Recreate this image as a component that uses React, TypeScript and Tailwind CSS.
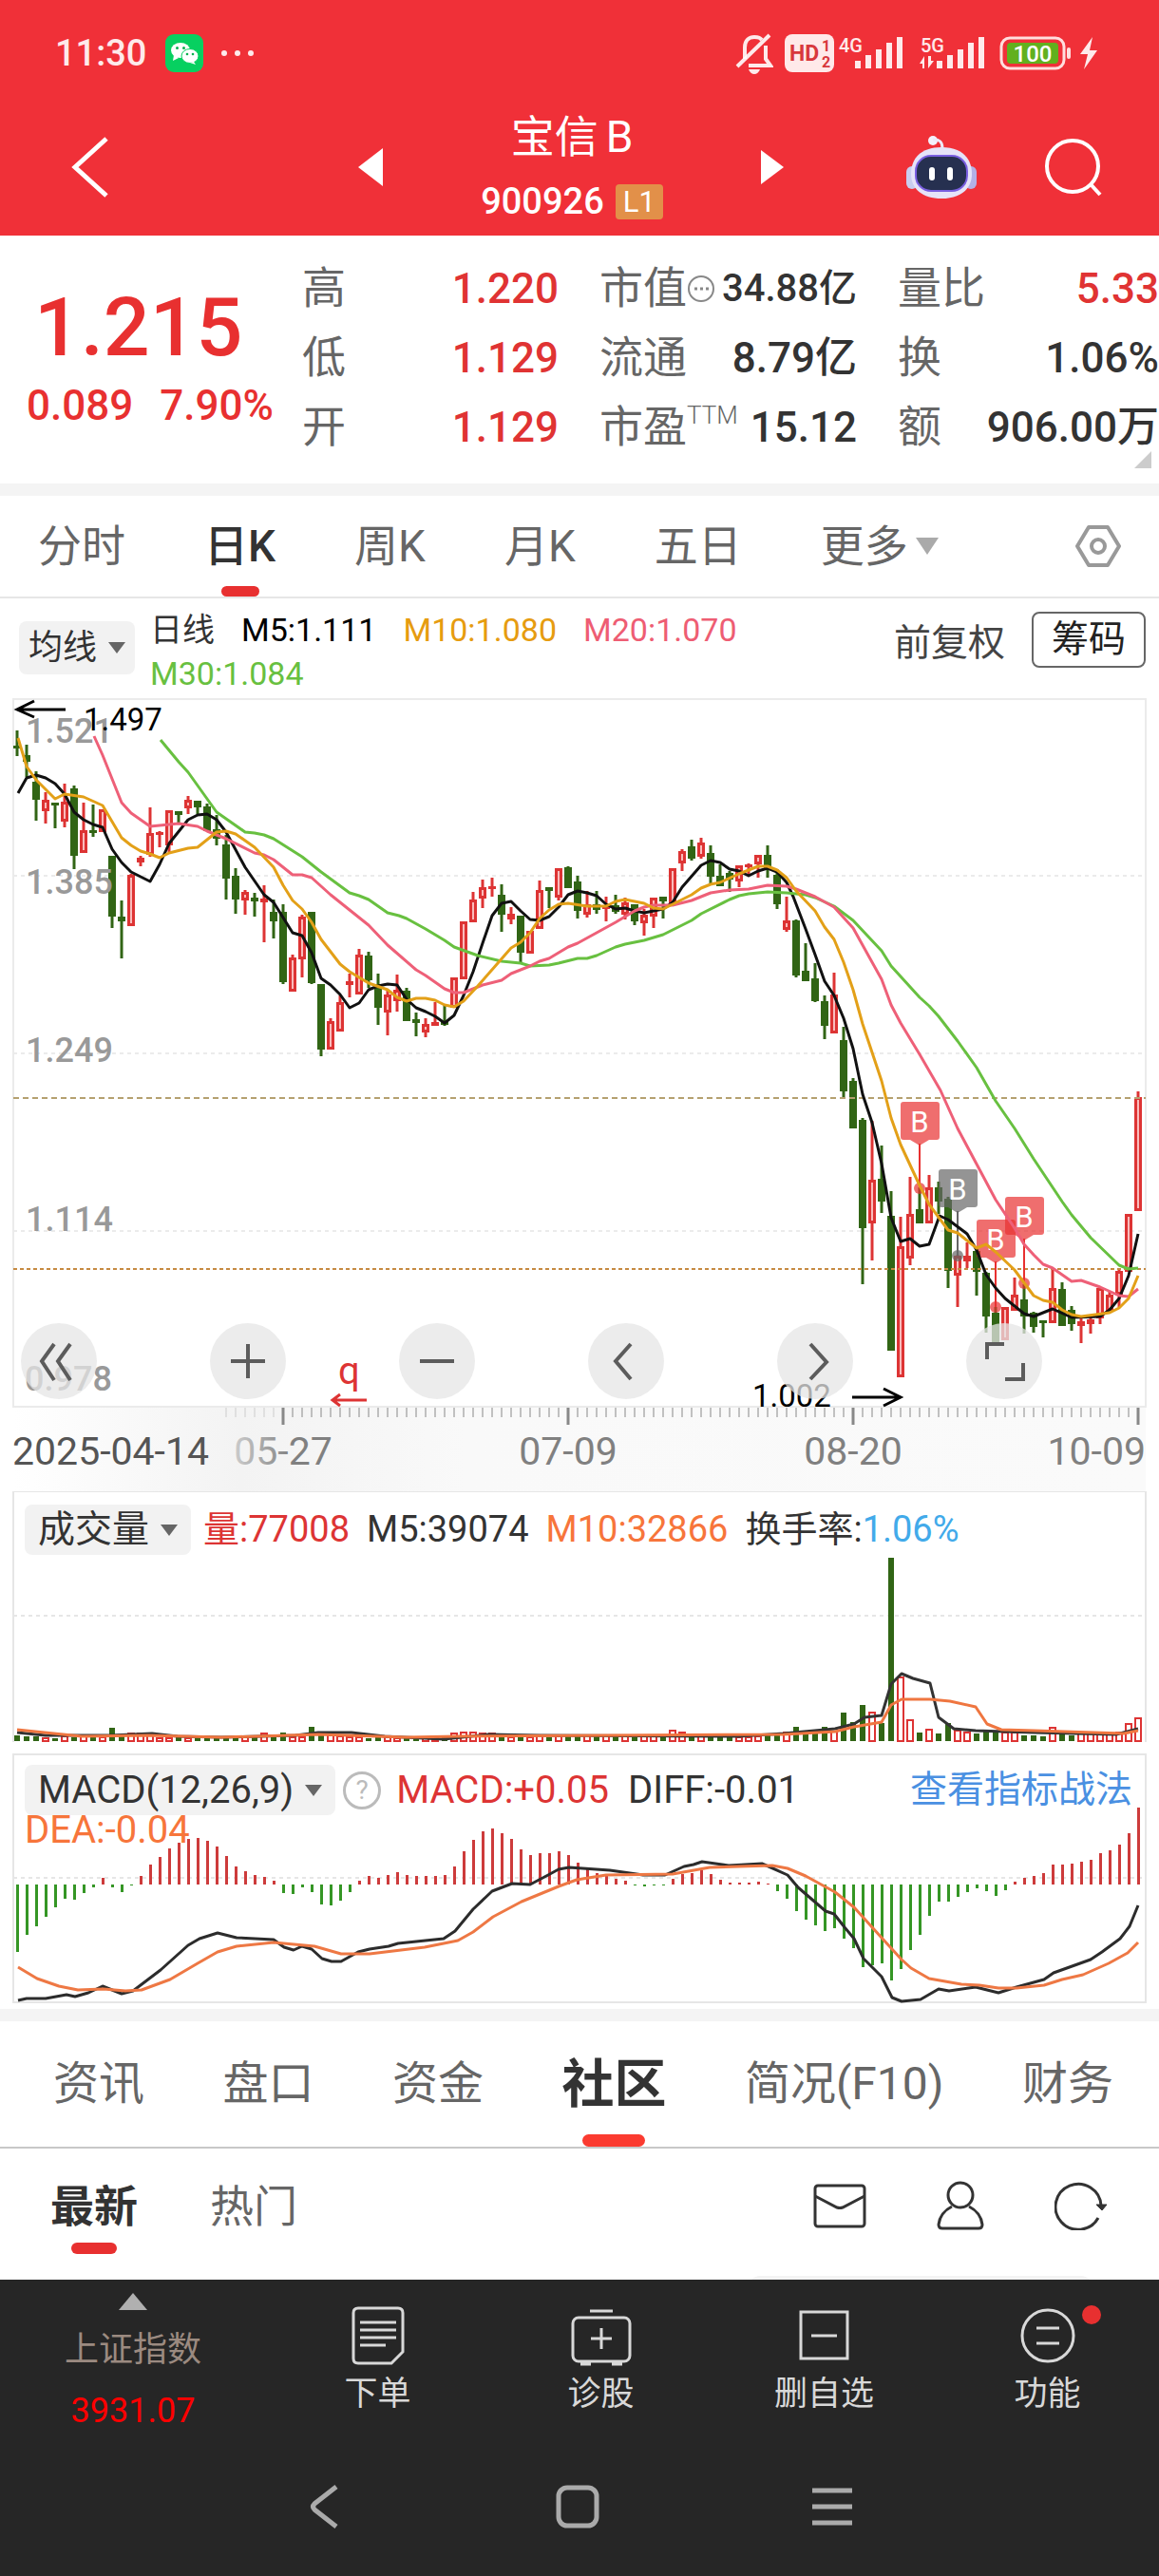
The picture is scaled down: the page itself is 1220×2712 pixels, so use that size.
import { useState } from 'react';

// [rising, high, body top, body bottom, low] in chart units
type Candle = [number, number, number, number, number];

const CANDLES: Candle[] = [
  [0, 39, 55, 58, 66], [0, 54, 65, 72, 88], [0, 82, 93, 112, 134], [1, 104, 112, 124, 137], [0, 115, 115, 117, 142],
  [1, 95, 114, 135, 141], [0, 97, 100, 171, 185], [1, 115, 144, 168, 168], [0, 117, 144, 146, 151], [1, 122, 122, 146, 146],
  [0, 171, 171, 235, 247], [0, 218, 235, 240, 279], [1, 190, 191, 245, 245], [1, 171, 173, 178, 182], [1, 120, 147, 170, 172],
  [1, 145, 146, 149, 162], [1, 123, 123, 160, 167], [0, 124, 124, 128, 136], [1, 108, 112, 121, 127], [0, 113, 113, 120, 127],
  [0, 116, 119, 145, 145], [0, 128, 143, 153, 160], [0, 149, 159, 195, 217], [0, 184, 192, 217, 232], [1, 207, 209, 218, 233],
  [0, 210, 215, 219, 235], [1, 202, 216, 220, 262], [0, 217, 230, 240, 258], [0, 222, 230, 304, 306], [1, 275, 278, 314, 314],
  [1, 233, 235, 280, 299], [0, 230, 230, 305, 306], [0, 306, 306, 375, 382], [1, 342, 345, 375, 375], [1, 318, 325, 356, 356],
  [1, 295, 303, 307, 320], [1, 269, 275, 317, 317], [0, 272, 276, 302, 310], [0, 295, 306, 331, 349], [1, 313, 317, 336, 360],
  [1, 296, 312, 324, 335], [0, 310, 313, 345, 345], [0, 336, 343, 347, 361], [1, 342, 348, 357, 362], [1, 325, 346, 350, 350],
  [0, 328, 346, 349, 350], [1, 299, 299, 331, 331], [1, 240, 240, 301, 301], [1, 209, 217, 241, 241], [1, 196, 204, 216, 226],
  [1, 194, 203, 206, 214], [0, 201, 212, 233, 251], [1, 225, 232, 238, 243], [0, 234, 234, 273, 284], [1, 250, 250, 274, 274],
  [1, 197, 207, 248, 248], [0, 204, 204, 208, 226], [1, 184, 184, 215, 218], [0, 182, 183, 205, 205], [0, 192, 198, 229, 237],
  [1, 208, 222, 233, 236], [0, 208, 222, 228, 232], [1, 214, 223, 227, 240], [0, 212, 223, 230, 232], [1, 215, 220, 233, 238],
  [0, 222, 222, 240, 244], [1, 227, 233, 242, 255], [1, 215, 215, 235, 247], [0, 214, 214, 219, 237], [1, 184, 184, 221, 221],
  [1, 164, 166, 179, 187], [0, 154, 161, 174, 176], [1, 152, 157, 172, 174], [0, 160, 168, 193, 200], [0, 180, 192, 203, 203],
  [0, 187, 189, 196, 209], [1, 181, 181, 198, 204], [1, 179, 180, 182, 192], [1, 170, 170, 180, 194], [0, 160, 170, 185, 194],
  [0, 185, 191, 222, 227], [1, 214, 239, 249, 251], [0, 238, 239, 297, 299], [0, 263, 292, 303, 303], [0, 284, 300, 324, 325],
  [0, 318, 324, 350, 364], [1, 294, 317, 358, 358], [0, 351, 365, 419, 425], [0, 405, 408, 458, 458], [0, 447, 449, 563, 622],
  [1, 450, 512, 558, 597], [0, 476, 511, 535, 547], [0, 524, 550, 692, 692], [1, 551, 582, 720, 720], [1, 509, 548, 595, 602],
  [0, 520, 543, 558, 558], [1, 507, 520, 558, 558], [0, 514, 520, 535, 548], [0, 530, 532, 608, 626], [1, 591, 592, 613, 646],
  [1, 578, 592, 598, 605], [0, 585, 587, 609, 634], [0, 609, 610, 656, 673], [0, 646, 652, 685, 685], [1, 646, 646, 681, 681],
  [1, 615, 633, 650, 650], [0, 622, 638, 656, 674], [0, 651, 652, 667, 673], [0, 660, 660, 663, 678], [1, 606, 626, 663, 663],
  [0, 620, 627, 666, 666], [0, 645, 649, 664, 671], [1, 657, 661, 666, 684], [1, 657, 659, 664, 674], [1, 626, 626, 658, 664],
  [1, 630, 633, 650, 650], [1, 606, 608, 633, 646], [1, 548, 548, 609, 609], [1, 419, 425, 545, 545],
];

const MA5 =
  '19,105 28,89 38,86 48,89 58,95 68,106 78,125 88,133 98,138 108,141 118,164 128,178 138,188 158,198 168,180 178,158 198,133 208,128 218,127 228,133 238,146 258,183 278,212 288,220 308,252 318,255 328,273 338,300 348,307 358,317 368,331 378,326 388,312 398,308 408,306 418,307 428,322 438,331 448,335 458,340 468,347 478,339 488,318 498,293 508,263 518,234 528,221 538,219 548,229 558,238 568,239 578,235 588,225 598,212 608,208 618,210 628,213 638,222 648,227 658,226 668,229 678,231 688,229 698,227 708,220 718,204 738,181 748,176 758,178 768,185 778,187 788,192 798,187 808,184 818,188 828,199 835,214 848,248 858,275 868,303 878,318 888,342 898,374 908,422 918,452 928,495 938,552 948,577 958,574 968,582 978,580 989,550 998,554 1018,569 1028,586 1038,612 1048,626 1058,637 1068,645 1078,653 1088,656 1108,648 1128,657 1158,656 1168,649 1178,637 1188,613 1198,569';
const MA10 =
  '19,47 28,77 38,91 58,111 68,106 88,109 108,118 118,135 128,152 138,160 148,166 158,169 168,173 178,168 198,163 208,162 228,146 238,145 248,148 268,162 288,183 298,202 308,218 318,227 328,241 338,259 358,285 368,293 388,305 408,312 418,320 428,324 438,321 448,321 458,323 468,328 478,330 488,324 503,308 538,268 548,262 558,252 568,237 578,228 588,222 598,221 618,224 638,224 648,219 658,217 678,221 688,226 698,227 708,222 728,212 738,205 748,201 758,199 778,190 798,182 808,182 818,186 828,194 838,208 858,229 868,246 878,259 888,283 898,312 908,348 928,408 938,447 948,475 968,518 978,538 998,565 1008,568 1028,584 1038,580 1048,588 1068,607 1088,634 1098,639 1108,641 1118,649 1128,654 1138,656 1168,652 1178,647 1188,637 1198,613';
const MA20 =
  '99,45 108,65 128,115 138,126 158,140 188,137 208,140 218,145 238,153 268,168 278,170 288,175 308,191 318,191 328,194 348,212 388,244 408,265 438,291 448,297 468,311 478,315 488,315 508,307 528,302 538,295 558,287 568,282 578,279 598,267 608,263 628,252 648,241 668,229 678,225 688,223 708,223 728,218 748,210 768,207 788,206 808,202 828,203 838,206 858,214 878,225 898,247 928,301 938,328 948,347 968,380 990,418 1008,458 1048,533 1068,563 1078,580 1088,591 1098,601 1108,605 1118,612 1128,619 1138,618 1158,625 1178,634 1188,635 1198,627';
const MA30 =
  '169,49 188,72 198,83 228,125 238,132 258,146 268,147 278,149 288,153 318,172 338,188 368,210 378,213 388,217 408,231 420,234 428,237 448,248 468,260 478,267 503,276 528,282 548,284 558,287 578,286 588,284 608,279 618,279 628,276 648,267 658,264 678,260 698,254 728,239 738,232 768,217 778,213 788,211 808,209 828,210 848,212 858,215 878,224 898,239 928,271 938,287 968,320 978,329 988,340 1008,366 1028,394 1048,429 1068,458 1088,490 1118,535 1128,549 1148,573 1178,602 1188,606 1198,605';

const VOLUMES = [
  6, 5, 5, 3, 3, 5, 4, 5, 4, 4, 14, 5, 8, 8, 8, 3, 3, 4, 3, 5, 4, 4, 5, 4, 4, 5, 8, 5, 9, 4, 4, 15, 8, 6, 5, 4, 4, 3, 5, 4,
  3, 5, 3, 3, 4, 5, 8, 9, 9, 8, 8, 6, 4, 7, 4, 6, 4, 5, 6, 6, 6, 5, 6, 5, 6, 5, 5, 5, 5, 11, 9, 5, 6, 6, 5, 4, 4, 4, 5, 7,
  8, 9, 15, 9, 11, 15, 10, 30, 20, 38, 30, 19, 193, 67, 22, 9, 12, 8, 19, 11, 9, 8, 10, 10, 9, 9, 6, 6, 5, 14, 8, 6, 8, 9, 9,
  8, 9, 18, 24,
];
const VOL_M5 =
  '18,254 48,257 117,257 160,255 187,258 233,259 311,257 335,254 370,254 405,258 467,261 514,256 568,257 778,258 825,255 879,250 899,245 910,238 928,236 938,203 949,192 961,197 979,202 988,238 1004,250 1027,252 1089,254 1175,256 1198,250';
const VOL_M10 =
  '18,251 47,254 86,258 156,257 233,259 335,256 428,259 482,258 825,256 879,253 899,248 928,243 938,225 949,219 979,219 1000,221 1027,227 1039,245 1054,251 1089,252 1183,255 1198,252';

const MACD_BARS = [
  -71, -53, -44, -34, -24, -15, -16, -9, -3, 7, -3, -8, -1, 9, 21, 29, 38, 44, 48, 49, 46, 40, 30, 19, 14, 10, 8, 4, -9, -10,
  -3, -8, -21, -22, -17, -8, 4, 9, 7, 10, 13, 10, 9, 9, 9, 10, 19, 35, 47, 56, 59, 54, 48, 37, 31, 33, 33, 35, 31, 23, 17, 12,
  9, 6, 4, -1, -2, -1, -1, 6, 11, 12, 15, 11, 5, 2, 2, 2, 3, 1, -7, -15, -28, -37, -43, -49, -46, -57, -67, -87, -85, -83,
  -101, -89, -69, -53, -33, -18, -18, -13, -8, -4, -7, -12, -6, 3, 7, 9, 12, 21, 21, 22, 24, 26, 33, 36, 42, 54, 81,
];
const DIFF =
  '19,260 28,258 48,258 70,254 79,256 93,252 108,245 128,253 140,250 169,228 198,202 210,195 229,189 249,194 288,196 299,204 309,207 318,203 328,206 339,216 349,219 359,219 377,209 389,206 409,203 419,200 467,195 479,187 498,164 518,145 539,137 558,138 577,128 588,122 599,120 642,123 677,128 700,128 720,119 730,117 739,114 767,118 802,116 809,119 829,128 840,141 869,166 878,169 889,183 899,195 909,216 928,235 939,257 949,261 969,259 988,248 999,250 1027,246 1051,252 1070,246 1099,238 1109,231 1148,217 1160,209 1179,195 1189,182 1198,160';
const DEA =
  '19,225 39,237 62,245 82,249 109,248 132,250 149,249 179,238 208,221 229,209 249,203 288,199 331,203 359,211 389,211 447,204 482,197 498,188 519,172 549,156 588,140 607,133 638,128 708,127 747,120 778,119 813,118 829,121 848,129 879,146 899,162 928,194 949,217 959,226 978,237 1012,243 1031,244 1051,247 1070,247 1099,244 1118,238 1140,233 1167,221 1187,210 1198,199';

const RED = '#dd3434';
const GREEN = '#316515';

const xOf = (i: number) => 18 + i * 10;

const MARKERS = [
  { x: 968, top: 430, dot: 521, color: '#e83030' },
  { x: 1008, top: 501, dot: 592, color: '#666666' },
  { x: 1048, top: 554, dot: 646, color: '#e83030' },
  { x: 1078, top: 530, dot: 621, color: '#e83030' },
];

function Line({ points, color }: { points: string; color: string }) {
  return <polyline points={points} fill="none" stroke={color} strokeWidth="3" strokeLinejoin="round" />;
}

function SignalBars() {
  return (
    <>
      <rect x="18" y="30" width="6" height="8" />
      <rect x="29" y="24" width="6" height="14" />
      <rect x="40" y="18" width="6" height="20" />
      <rect x="51" y="11" width="6" height="27" />
      <rect x="62" y="5" width="6" height="33" />
    </>
  );
}

function StatusBar() {
  return (
    <div className="flex h-28 items-center pl-[58px] pr-[64px] text-white/90">
      <span className="text-[38px] font-medium">11:30</span>
      <svg viewBox="0 0 40 40" className="ml-5 size-10">
        <rect width="40" height="40" rx="9" fill="#07d060" />
        <ellipse cx="16" cy="17" rx="10" ry="8" fill="#fff" />
        <path d="M9 22l-1 6 6-3z" fill="#fff" />
        <circle cx="12.500" cy="14.500" r="1.500" fill="#07b050" />
        <circle cx="19.500" cy="14.500" r="1.500" fill="#07b050" />
        <ellipse cx="26" cy="23" rx="9" ry="7.500" fill="#fff" stroke="#07d060" />
        <path d="M30 29l2 3-6-2z" fill="#fff" />
        <circle cx="23" cy="21" r="1.300" fill="#07b050" />
        <circle cx="29" cy="21" r="1.300" fill="#07b050" />
      </svg>
      <svg viewBox="0 0 36 8" className="ml-[18px] w-9" fill="currentColor">
        <circle cx="4" cy="4" r="3" />
        <circle cx="18" cy="4" r="3" />
        <circle cx="32" cy="4" r="3" />
      </svg>
      <svg viewBox="0 0 40 44" className="ml-auto w-10" fill="none" stroke="currentColor" strokeWidth="4">
        <path d="M10 28V16C10 8 15 5 20 5s6 1 8 3" />
        <path d="M32 14v14l5 7H14" />
        <path d="M36 3L2 36" />
        <path d="M14 39h12q-2 5-6 5t-6-5z" fill="currentColor" stroke="none" />
      </svg>
      <svg viewBox="0 0 52 40" className="ml-3 w-[52px]">
        <rect width="52" height="40" rx="8" fill="#ffe9e9" />
        <text x="5" y="28" fontSize="23" fontWeight="700" fill="#d8383c">HD</text>
        <text x="39" y="18" fontSize="16" fontWeight="700" fill="#d8383c">1</text>
        <text x="39" y="35" fontSize="16" fontWeight="700" fill="#d8383c">2</text>
      </svg>
      <svg viewBox="0 0 70 44" className="ml-1 w-[70px]" fill="currentColor">
        <text x="1" y="21" fontSize="20" fontWeight="500">4G</text>
        <SignalBars />
      </svg>
      <svg viewBox="0 0 70 44" className="ml-4 w-[70px]" fill="currentColor">
        <text x="1" y="21" fontSize="20" fontWeight="500">5G</text>
        <path d="M0 33l5-8v13H3v-5zM15 30l-6 8V25h3v5z" />
        <SignalBars />
      </svg>
      <svg viewBox="0 0 76 36" className="ml-[14px] w-[76px]">
        <rect x="2" y="2" width="66" height="32" rx="9" fill="none" stroke="#ffdede" strokeWidth="3" />
        <rect x="8" y="7" width="54" height="22" rx="4" fill="#62b01e" />
        <rect x="71" y="12" width="4" height="12" rx="2" fill="#ffdede" />
        <text x="35" y="27" fontSize="24" fontWeight="500" fill="#fff" textAnchor="middle">100</text>
      </svg>
      <svg viewBox="0 0 20 34" className="ml-2 w-5" fill="currentColor">
        <path d="M14 0L1 18h8L5 34 19 14h-8z" />
      </svg>
    </div>
  );
}

function TitleBar() {
  return (
    <div className="flex h-[136px] items-center justify-between pb-2 pl-[70px] pr-[58px] text-white">
      <button aria-label="返回">
        <svg viewBox="0 0 44 66" className="h-[66px]" fill="none" stroke="currentColor" strokeWidth="5">
          <path d="M42 3L9 33l33 30" />
        </svg>
      </button>
      <div className="flex items-center gap-[104px] pl-[134px]">
        <button aria-label="上一只">
          <svg viewBox="0 0 26 40" className="w-[26px]" fill="currentColor">
            <path d="M26 0v40L0 20z" />
          </svg>
        </button>
        <div className="flex w-[190px] flex-col items-center pt-1">
          <h1 className="text-[46px] leading-[68px]">宝信<span className="pl-2">B</span></h1>
          <div className="flex items-center gap-3 whitespace-nowrap text-[38px] font-medium leading-[68px]">
            900926
            <span className="rounded-sm bg-[#e29049] px-2 text-[31px] font-normal leading-[37px]">L1</span>
          </div>
        </div>
        <button aria-label="下一只">
          <svg viewBox="0 0 24 36" className="w-6" fill="currentColor">
            <path d="M0 0v36l24-18z" />
          </svg>
        </button>
      </div>
      <div className="flex items-center gap-[70px]">
        <button aria-label="智能助手">
          <svg viewBox="0 0 74 66" className="w-[74px]">
            <circle cx="28" cy="5" r="5" fill="#f4f0fc" />
            <path d="M28 4q10-1 10 9" fill="none" stroke="#eee8fa" strokeWidth="3" />
            <rect x="0" y="32" width="12" height="24" rx="6" fill="#c9cdf0" />
            <rect x="62" y="32" width="12" height="24" rx="6" fill="#b3b0e6" />
            <path d="M37 12c22 0 32 12 32 28S57 66 37 66 5 56 5 40s10-28 32-28z" fill="#e6e3f8" />
            <rect x="10" y="21" width="54" height="37" rx="16" fill="#263050" stroke="#7a5fe0" strokeWidth="2" />
            <rect x="24" y="33" width="6" height="14" rx="3" fill="#fff" />
            <rect x="43" y="33" width="6" height="14" rx="3" fill="#fff" />
          </svg>
        </button>
        <button aria-label="搜索">
          <svg viewBox="0 0 64 64" className="w-16" fill="none" stroke="currentColor" strokeWidth="4">
            <circle cx="31" cy="31" r="27" />
            <path d="M50 50l10 11" />
          </svg>
        </button>
      </div>
    </div>
  );
}

const STATS = [
  [
    { label: '高', value: '1.220', color: 'text-[#e03333]' },
    { label: '低', value: '1.129', color: 'text-[#e03333]' },
    { label: '开', value: '1.129', color: 'text-[#e03333]' },
  ],
  [
    { label: '市值', mark: 'dots', value: '34.88亿', color: 'text-[#333]' },
    { label: '流通', value: '8.79亿', color: 'text-[#333]' },
    { label: '市盈', mark: 'ttm', value: '15.12', color: 'text-[#333]' },
  ],
  [
    { label: '量比', value: '5.33', color: 'text-[#e03333]' },
    { label: '换', value: '1.06%', color: 'text-[#333]' },
    { label: '额', value: '906.00万', color: 'text-[#333]' },
  ],
];

function Quote() {
  return (
    <section className="relative flex h-[261px] whitespace-nowrap pl-7 pt-[19px]">
      <div className="w-[290px] shrink-0 text-[#e83030]">
        <p className="pl-2 pt-9 text-[86px] font-medium leading-[84px]">1.215</p>
        <p className="flex gap-7 text-[44px] font-medium leading-[80px]">
          <span>0.089</span>
          <span>7.90%</span>
        </p>
      </div>
      <div className="grid flex-1 grid-cols-[270px_271px_1fr] gap-x-[43px]">
        {STATS.map((col, c) => (
          <dl key={c}>
            {col.map((s) => (
              <div key={s.label} className="flex h-[73px] items-center justify-between">
                <dt className="flex items-center text-[46px] text-[#666]">
                  {s.label}
                  {s.mark === 'dots' && (
                    <svg viewBox="0 0 30 30" className="w-[30px]" fill="none" stroke="#888" strokeWidth="2">
                      <circle cx="15" cy="15" r="13" />
                      <path d="M8 15h3M14 15h3M20 15h3" strokeWidth="3" />
                    </svg>
                  )}
                  {s.mark === 'ttm' && <sup className="text-[26px] font-light">TTM</sup>}
                </dt>
                <dd className={`font-medium ${s.mark === 'dots' ? 'text-[40px]' : 'text-[44px]'} ${s.color}`}>{s.value}</dd>
              </div>
            ))}
          </dl>
        ))}
      </div>
      <svg viewBox="0 0 18 18" className="absolute bottom-4 right-2 w-[18px]" fill="#ccc">
        <path d="M18 0v18H0z" />
      </svg>
    </section>
  );
}

function PeriodTabs() {
  const [active, setActive] = useState('日K');
  return (
    <nav className="flex h-[108px] items-center gap-[83px] border-b-2 border-[#e6e6e6] pl-[40px] pr-10 text-[46px] text-[#666]">
      {['分时', '日K', '周K', '月K', '五日'].map((t) => (
        <button
          key={t}
          onClick={() => setActive(t)}
          className={`relative h-full ${t === active ? 'font-medium text-[#333]' : ''}`}
        >
          {t}
          {t === active && <span className="absolute bottom-0 left-1/2 h-[11px] w-10 -translate-x-1/2 rounded-full bg-[#e83030]" />}
        </button>
      ))}
      <button className="flex items-center gap-2">
        更多
        <svg viewBox="0 0 24 18" className="w-6" fill="#aaa">
          <path d="M0 0h24L12 18z" />
        </svg>
      </button>
      <button aria-label="设置" className="ml-auto">
        <svg viewBox="0 0 48 46" className="w-12" fill="none" stroke="#999" strokeWidth="4">
          <path d="M14 3h20l12 20-12 20H14L2 23z" strokeLinejoin="round" />
          <circle cx="24" cy="23" r="7" />
        </svg>
      </button>
    </nav>
  );
}

function Caret() {
  return (
    <svg viewBox="0 0 18 12" className="w-[18px]" fill="#666">
      <path d="M0 0h18L9 12z" />
    </svg>
  );
}

function MaBar() {
  return (
    <div className="flex h-[100px] whitespace-nowrap pl-5 pr-[14px] pt-[14px]">
      <button className="mt-[10px] flex h-14 items-center gap-3 rounded-lg bg-[#f2f2f2] px-[10px] text-4xl text-[#333]">
        均线
        <Caret />
      </button>
      <div className="-mt-1 flex flex-1 flex-wrap content-start gap-x-7 pl-4 text-[34px] leading-[46px]">
        <span className="text-[#333]">日线</span>
        <span className="text-black">M5:1.111</span>
        <span className="text-[#e69c10]">M10:1.080</span>
        <span className="text-[#ee5d73]">M20:1.070</span>
        <span className="text-[#68c040]">M30:1.084</span>
      </div>
      <button className="h-[66px] px-7 text-[39px] text-[#444]">前复权</button>
      <button className="h-[59px] rounded-lg border-2 border-[#666] px-[19px] text-[39px] leading-none text-[#222]">筹码</button>
    </div>
  );
}

const CONTROLS = [
  { name: '快退', d: 'M35 22L22 40l13 20M52 22L39 40l13 20' },
  { name: '放大', d: 'M40 22v36M22 40h36' },
  { name: '缩小', d: 'M22 40h36' },
  { name: '左移', d: 'M45 22L29 40l16 19' },
  { name: '右移', d: 'M35 22l17 19-17 18' },
  { name: '全屏', d: 'M22 38V22h18M60 42v17H41' },
];

function PriceChart() {
  return (
    <div className="relative">
      <svg viewBox="0 0 1220 840" className="block w-full">
        <defs>
          <linearGradient id="axis" x1="0" x2="1" y1="0" y2="0">
            <stop offset="0" stopColor="#fff" />
            <stop offset="0.200" stopColor="#f3f3f3" />
            <stop offset="0.400" stopColor="#f9f9f9" />
            <stop offset="1" stopColor="#fafafa" />
          </linearGradient>
          <linearGradient id="fade" x1="0" x2="1" y1="0" y2="0">
            <stop offset="0" stopColor="#ccc" />
            <stop offset="0.600" stopColor="#808080" />
          </linearGradient>
        </defs>
        <rect x="14" y="752" width="1192" height="88" fill="url(#axis)" />
        <rect x="14" y="6" width="1192" height="745" fill="none" stroke="#ebebeb" strokeWidth="2" />
        {[192, 379, 566].map((y) => (
          <line key={y} x1="14" x2="1206" y1={y} y2={y} stroke="#ebebeb" strokeWidth="2" strokeDasharray="4 4" />
        ))}
        {CANDLES.map(([up, high, top, bottom, low], i) => {
          const x = xOf(i);
          const height = Math.max(bottom - top, 3);
          return (
            <g key={i}>
              <line x1={x} x2={x} y1={high} y2={low} stroke={up ? RED : GREEN} strokeWidth="3" />
              <rect x={x - 4} y={top} width="8" height={height} fill={up ? RED : GREEN} />
              {up === 1 && height > 8 && <rect x={x - 1} y={top + 3} width="2" height={height - 6} fill="#f9bcbc" />}
            </g>
          );
        })}
        <line x1="14" x2="1206" y1="426" y2="426" stroke="#b5a070" strokeWidth="2" strokeDasharray="6 4" />
        <line x1="14" x2="1206" y1="606" y2="606" stroke="#c68a42" strokeWidth="2" strokeDasharray="4 3" />
        {MARKERS.map((m) => (
          <g key={m.x}>
            <line x1={m.x} x2={m.x} y1={m.top + 44} y2={m.dot} stroke={m.color} strokeWidth="2" />
            <circle cx={m.x} cy={m.dot} r="6" fill={m.color} opacity="0.700" />
            <rect x={m.x - 20} y={m.top} width="41" height="40" rx="3" fill={m.color} opacity="0.700" />
            <path d={`M${m.x - 10} ${m.top + 40}h20l-10 6z`} fill={m.color} opacity="0.700" />
            <text x={m.x} y={m.top + 32} fontSize="31" fill="#fff" textAnchor="middle">B</text>
          </g>
        ))}
        <Line points={MA5} color="#111" />
        <Line points={MA30} color="#68c040" />
        <Line points={MA20} color="#ee6078" />
        <Line points={MA10} color="#e3a018" />
        <g fontSize="36" fontWeight="500" fill="#999">
          <text x="27" y="52">1.521</text>
          <text x="27" y="211">1.385</text>
          <text x="27" y="388">1.249</text>
          <text x="27" y="566">1.114</text>
          <text x="26" y="734">0.978</text>
        </g>
        <g fill="none" stroke="#000" strokeWidth="3">
          <path d="M69 17H18M36 8L18 17l18 8" />
          <path d="M897 741h50M930 732l18 9-18 9" />
          <path d="M386 744h-36M358 738l-8 6 8 6" stroke={RED} />
        </g>
        <text x="88" y="39" fontSize="33" fill="#000">1.497</text>
        <text x="792" y="751" fontSize="33" fill="#000">1.002</text>
        <text x="356" y="727" fontSize="40" fill={RED}>q</text>
        {CANDLES.map((_, i) =>
          i < 22 ? null : (
            <line
              key={i}
              x1={xOf(i)}
              x2={xOf(i)}
              y1="752"
              y2={i % 30 === 28 ? 770 : 762}
              stroke={i < 28 ? '#ccc' : '#888'}
              strokeWidth={i % 30 === 28 ? 3 : 1}
            />
          ),
        )}
        <g fontSize="41" fill="#808080">
          <text x="13" y="812" fill="#555">2025-04-14</text>
          <text x="298" y="812" textAnchor="middle" fill="url(#fade)">05-27</text>
          <text x="598" y="812" textAnchor="middle">07-09</text>
          <text x="898" y="812" textAnchor="middle">08-20</text>
          <text x="1206" y="812" textAnchor="end">10-09</text>
        </g>
      </svg>
      {/* pan / zoom controls float above the candles */}
      <div className="absolute left-[22px] right-[123px] top-[663px] flex justify-between">
        {CONTROLS.map((c) => (
          <button key={c.name} aria-label={c.name} className="size-20 rounded-full bg-[#e6e6e6]/75">
            <svg viewBox="0 0 80 80" fill="none" stroke="#5c5c5c" strokeWidth="4">
              <path d={c.d} />
            </svg>
          </button>
        ))}
      </div>
    </div>
  );
}

function VolumeChart() {
  return (
    <div className="relative">
      <svg viewBox="0 0 1220 276" className="block w-full">
        <path d="M14 264V0H1206V264" fill="none" stroke="#e6e6e6" strokeWidth="2" />
        <line x1="14" x2="1206" y1="131" y2="131" stroke="#e6e6e6" strokeWidth="2" strokeDasharray="4 4" />
        {VOLUMES.map((v, i) =>
          CANDLES[i][0] ? (
            <rect key={i} x={xOf(i) - 3} y={263 - v} width="6" height={v} fill="#fff" stroke={RED} strokeWidth="2" />
          ) : (
            <rect key={i} x={xOf(i) - 3} y={263 - v} width="6" height={v} fill={GREEN} />
          ),
        )}
        <Line points={VOL_M5} color="#333" />
        <Line points={VOL_M10} color="#ef7640" />
      </svg>
      <div className="absolute inset-x-0 top-3 flex items-center whitespace-nowrap pl-[26px] text-[38px] text-[#333]">
        <button className="mr-[13px] flex h-[53px] items-center gap-3 rounded-lg bg-[#f2f2f2] px-[14px] text-[39px]">
          成交量
          <Caret />
        </button>
        <div className="flex gap-[18px]">
          <span className="text-[#dd3434]">量:77008</span>
          <span>M5:39074</span>
          <span className="text-[#f7753b]">M10:32866</span>
          <span>换手率:<span className="text-[#42aaea]">1.06%</span></span>
        </div>
      </div>
    </div>
  );
}

function MacdChart() {
  return (
    <div className="relative">
      <svg viewBox="0 0 1220 269" className="block w-full">
        <rect x="14" y="1" width="1192" height="261" fill="none" stroke="#e6e6e6" strokeWidth="2" />
        <line x1="14" x2="1206" y1="131" y2="131" stroke="#e6e6e6" strokeWidth="2" strokeDasharray="4 4" />
        {MACD_BARS.map((v, i) => (
          <rect
            key={i}
            x={xOf(i) - 1}
            y={v > 0 ? 138 - v : 138}
            width="3"
            height={Math.abs(v)}
            fill={v > 0 ? '#cd3b3b' : '#359625'}
          />
        ))}
        <Line points={DIFF} color="#2c2c2c" />
        <Line points={DEA} color="#ee7844" />
      </svg>
      <div className="absolute inset-x-0 top-3 whitespace-nowrap pl-[26px] pr-7 text-[40px] text-[#333]">
        <div className="flex h-[53px] items-center">
          <button className="flex h-[53px] items-center gap-3 rounded-lg bg-[#f2f2f2] px-[14px]">
            MACD(12,26,9)
            <Caret />
          </button>
          <button aria-label="指标说明" className="ml-2 size-10 rounded-full border-3 border-[#bbb] text-[28px] leading-none text-[#bbb]">?</button>
          <span className="ml-4 text-[#dd3434]">MACD:+0.05</span>
          <span className="ml-5">DIFF:-0.01</span>
          <a href="#guide" className="ml-auto text-[39px] text-[#4a90e2]">查看指标战法</a>
        </div>
        <p className="leading-8 text-[#f7753b]">DEA:-0.04</p>
      </div>
    </div>
  );
}

function InfoTabs() {
  const [active, setActive] = useState('社区');
  return (
    <nav className="flex h-[134px] items-center justify-between border-b-2 border-[#c8c8c8] pl-[56px] pr-[48px] text-[48px] text-[#666]">
      {['资讯', '盘口', '资金', '社区', '简况(F10)', '财务'].map((t) => (
        <button
          key={t}
          onClick={() => setActive(t)}
          className={`relative h-full ${t === active ? 'text-[55px] font-bold text-[#333]' : ''}`}
        >
          {t}
          {t === active && <span className="absolute bottom-0 left-1/2 h-[13px] w-[66px] -translate-x-1/2 rounded-full bg-[#fb3b30]" />}
        </button>
      ))}
    </nav>
  );
}

function FeedBar() {
  return (
    <div className="relative flex h-[138px] items-start overflow-hidden pl-[53px] pr-[54px] pt-[23px] text-[46px] text-[#666]">
      <button className="relative h-[88px] pb-3 font-bold text-[#333]">
        最新
        <span className="absolute bottom-0 left-1/2 h-3 w-12 -translate-x-1/2 rounded-full bg-[#e83030]" />
      </button>
      <button className="ml-[76px] h-[88px] pb-3">热门</button>
      <div className="ml-auto flex gap-[74px] pt-[11px] text-[#333]">
        <button aria-label="消息">
          <svg viewBox="0 0 56 52" className="w-14" fill="none" stroke="currentColor" strokeWidth="3">
            <rect x="2" y="5" width="52" height="43" rx="3" />
            <path d="M2 16l23 12q3 1 6 0l23-12" />
          </svg>
        </button>
        <button aria-label="我的">
          <svg viewBox="0 0 50 52" className="w-[50px]" fill="none" stroke="currentColor" strokeWidth="3">
            <ellipse cx="25" cy="15" rx="13" ry="13" />
            <path d="M16 27C8 31 3 38 2 46q0 4 4 4h38q4 0 4-4c-1-8-6-15-14-19" />
          </svg>
        </button>
        <button aria-label="刷新">
          <svg viewBox="0 0 56 52" className="w-14" fill="none" stroke="currentColor" strokeWidth="3">
            <path d="M49 26A24 24 0 1 0 46 39" />
            <path d="M44 25h11l-5 6z" fill="currentColor" strokeWidth="1" />
          </svg>
        </button>
      </div>
      <div className="absolute -bottom-5 right-[70px] h-6 w-[362px] rounded-xl bg-[#f4f4f4]" />
    </div>
  );
}

function OrderIcon() {
  return (
    <svg viewBox="0 0 64 64" className="h-16" fill="none" stroke="currentColor" strokeWidth="3">
      <path d="M11 3h42q5 0 5 5v41L46 61H11q-5 0-5-5V8q0-5 5-5z" />
      <path d="M13 18h38M13 26h38M13 34h38M13 42h27" />
    </svg>
  );
}

function DiagnoseIcon() {
  return (
    <svg viewBox="0 0 64 64" className="h-16" fill="none" stroke="currentColor" strokeWidth="3">
      <path d="M20 6h24" />
      <rect x="2" y="13" width="60" height="46" rx="6" />
      <path d="M32 24v22M21 35h22" />
      <path d="M10 61h11M43 61h11" strokeWidth="5" />
    </svg>
  );
}

function RemoveIcon() {
  return (
    <svg viewBox="0 0 64 64" className="h-16" fill="none" stroke="currentColor" strokeWidth="3">
      <rect x="7" y="7" width="49" height="49" />
      <path d="M18 32h27" />
    </svg>
  );
}

function FeatureIcon() {
  return (
    <svg viewBox="0 0 64 64" className="h-16" fill="none" stroke="currentColor" strokeWidth="3">
      <circle cx="32" cy="32" r="27" />
      <path d="M20 24h24M20 40h24" />
    </svg>
  );
}

const ACTIONS = [
  { label: '下单', icon: <OrderIcon /> },
  { label: '诊股', icon: <DiagnoseIcon /> },
  { label: '删自选', icon: <RemoveIcon /> },
  { label: '功能', icon: <FeatureIcon />, dot: true },
];

function BottomBar() {
  return (
    <footer className="bg-[#262626]">
      <div className="flex h-[164px]">
        <button className="flex w-[280px] flex-col items-center pt-[14px] text-4xl text-[#9b8a80]">
          <svg viewBox="0 0 30 18" className="w-[30px]" fill="#b0b0b0">
            <path d="M15 0l15 18H0z" />
          </svg>
          <span className="pt-5 leading-[44px]">上证指数</span>
          <span className="pt-5 leading-[44px] text-[#f00]">3931.07</span>
        </button>
        <div className="flex flex-1">
          {ACTIONS.map((a) => (
            <button key={a.label} className="relative flex flex-1 flex-col items-center pt-[27px] text-[35px] text-[#d8d8d8]">
              {a.icon}
              <span className="pt-2 leading-[44px]">{a.label}</span>
              {a.dot && <span className="absolute right-[61px] top-[27px] size-5 rounded-full bg-[#e83030]" />}
            </button>
          ))}
        </div>
      </div>
      <div className="flex h-[148px] items-center justify-center gap-[222px] pr-1 pt-[2px] text-[#aaa]">
        <button aria-label="后退">
          <svg viewBox="0 0 46 46" className="w-[46px]" fill="none" stroke="currentColor" strokeWidth="5">
            <path d="M37 2L14 20q-3 3 0 6l23 18" />
          </svg>
        </button>
        <button aria-label="主屏幕">
          <svg viewBox="0 0 46 46" className="w-[46px]" fill="none" stroke="currentColor" strokeWidth="5">
            <rect x="3" y="3" width="40" height="40" rx="9" />
          </svg>
        </button>
        <button aria-label="最近任务">
          <svg viewBox="0 0 46 46" className="w-[46px]" fill="none" stroke="currentColor" strokeWidth="5">
            <path d="M2 6h42M2 23h42M2 40h42" />
          </svg>
        </button>
      </div>
    </footer>
  );
}

export default function App() {
  return (
    <div className="bg-white font-['Roboto','Noto_Sans_CJK_SC',sans-serif]">
      <header className="bg-[#f03038]">
        <StatusBar />
        <TitleBar />
      </header>
      <Quote />
      <div className="h-[13px] bg-[#f4f4f4]" />
      <PeriodTabs />
      <MaBar />
      <PriceChart />
      <VolumeChart />
      <MacdChart />
      <div className="h-[13px] bg-[#f4f4f4]" />
      <InfoTabs />
      <FeedBar />
      <BottomBar />
    </div>
  );
}
